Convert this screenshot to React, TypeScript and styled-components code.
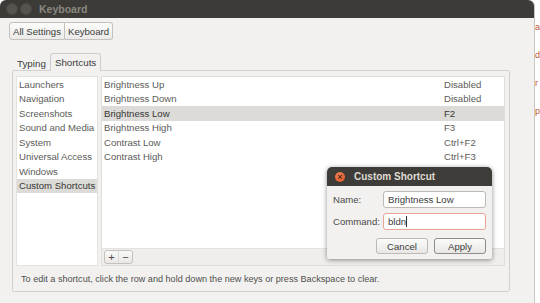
import { createGlobalStyle } from 'styled-components';
import styled from 'styled-components';

const categories = [
  'Launchers',
  'Navigation',
  'Screenshots',
  'Sound and Media',
  'System',
  'Universal Access',
  'Windows',
  'Custom Shortcuts',
];

const shortcuts = [
  { name: 'Brightness Up', accel: 'Disabled' },
  { name: 'Brightness Down', accel: 'Disabled' },
  { name: 'Brightness Low', accel: 'F2' },
  { name: 'Brightness High', accel: 'F3' },
  { name: 'Contrast Low', accel: 'Ctrl+F2' },
  { name: 'Contrast High', accel: 'Ctrl+F3' },
];

export default function App() {
  return (
    <>
      <GlobalStyle />
      <Page>
        <Window>
          <TitleBar>
            <WinButtons>
              <WinDot />
              <WinDot />
            </WinButtons>
            <Title>Keyboard</Title>
          </TitleBar>

          <Crumbs>
            <Crumb>All Settings</Crumb>
            <Crumb>Keyboard</Crumb>
          </Crumbs>

          <Tabs>
            <Tab>Typing</Tab>
            <Tab $active>Shortcuts</Tab>
          </Tabs>

          <Notebook>
            <Panes>
              <CategoryList>
                {categories.map((c, i) => (
                  <Row key={c} $selected={i === categories.length - 1}>
                    {c}
                  </Row>
                ))}
              </CategoryList>

              <RightPane>
                <ShortcutList>
                  {shortcuts.map((s) => (
                    <Row key={s.name} $selected={s.name === 'Brightness Low'}>
                      <NameCell>{s.name}</NameCell>
                      <AccelCell>{s.accel}</AccelCell>
                    </Row>
                  ))}
                </ShortcutList>
                <ListToolbar>
                  <SmallButtons>
                    <SmallButton>+</SmallButton>
                    <SmallButton>−</SmallButton>
                  </SmallButtons>
                </ListToolbar>
              </RightPane>
            </Panes>
            <Hint>
              To edit a shortcut, click the row and hold down the new keys or press Backspace to clear.
            </Hint>
          </Notebook>
        </Window>

        <Backdrop>
          <span>a</span>
          <span>d</span>
          <span>r</span>
          <span>p</span>
        </Backdrop>

        <Dialog>
          <DialogTitle>
            <CloseDot>×</CloseDot>
            Custom Shortcut
          </DialogTitle>
          <DialogBody>
            <Field>
              <FieldLabel>Name:</FieldLabel>
              <Entry>Brightness Low</Entry>
            </Field>
            <Field>
              <FieldLabel>Command:</FieldLabel>
              <Entry $focused>
                bldn<Caret />
              </Entry>
            </Field>
            <DialogButtons>
              <PushButton>Cancel</PushButton>
              <PushButton $default>Apply</PushButton>
            </DialogButtons>
          </DialogBody>
        </Dialog>
      </Page>
    </>
  );
}

const GlobalStyle = createGlobalStyle`
  html, body {
    margin: 0;
    padding: 0;
    background: #ffffff;
  }
  body {
    font-family: 'Liberation Sans', Arial, sans-serif;
    font-size: 9.6px;
    color: #4f4f4c;
  }
`;

const Page = styled.div`
  position: relative;
  display: flex;
  width: 540px;
  height: 303px;
  overflow: hidden;
`;

const Window = styled.div`
  width: 535px;
  height: 303px;
  background: #f2f1f0;
  border-radius: 6px 6px 0 0;
  border-right: 1px solid #c9c7c3;
  box-sizing: border-box;
  display: flex;
  flex-direction: column;
`;

const TitleBar = styled.div`
  height: 18px;
  background: #3c3b37;
  border-radius: 6px 6px 0 0;
  display: flex;
  align-items: center;
  padding-left: 6px;
  gap: 7px;
`;

const WinButtons = styled.div`
  display: flex;
  gap: 2px;
`;

const WinDot = styled.div`
  width: 10px;
  height: 10px;
  border-radius: 50%;
  background: #55544f;
  border: 1px solid #4a4944;
`;

const Title = styled.span`
  color: #8a8880;
  font-size: 10.5px;
  font-weight: bold;
`;

const Crumbs = styled.div`
  display: flex;
  margin: 4px 0 0 9px;
  height: 18px;
`;

const Crumb = styled.div`
  display: flex;
  align-items: center;
  padding: 0 3px;
  border: 1px solid #c3c1bd;
  background: linear-gradient(#fbfbfa, #ecebe9);
  color: #3c3c3c;
  font-size: 9.6px;
  &:first-child {
    border-radius: 3px 0 0 3px;
  }
  &:last-child {
    border-radius: 0 3px 3px 0;
    border-left: none;
  }
`;

const Tabs = styled.div`
  display: flex;
  align-items: flex-end;
  margin: 13px 0 0 12px;
  height: 18px;
  padding-left: 3px;
  position: relative;
  z-index: 1;
`;

const Tab = styled.div<{ $active?: boolean }>`
  height: ${(p) => (p.$active ? '18px' : '15px')};
  display: flex;
  align-items: center;
  padding: 0 ${(p) => (p.$active ? '4px' : '2px')};
  color: #3c3c3c;
  font-size: 9.8px;
  box-sizing: border-box;
  ${(p) =>
    p.$active &&
    `
    background: #f2f1f0;
    border: 1px solid #cfcdc9;
    border-bottom: none;
    border-radius: 3px 3px 0 0;
    margin-left: 2px;
  `}
`;

const Notebook = styled.div`
  margin: -1px 0 0 12px;
  width: 498px;
  height: 222px;
  border: 1px solid #d3d1cd;
  border-radius: 2px;
  box-sizing: border-box;
  padding: 5px 4px 0 3px;
  display: flex;
  flex-direction: column;
`;

const Panes = styled.div`
  display: flex;
  gap: 3px;
  height: 190px;
`;

const CategoryList = styled.div`
  width: 82px;
  background: #ffffff;
  border: 1px solid #e4e2df;
  box-sizing: border-box;
`;

const RightPane = styled.div`
  flex: 1;
  display: flex;
  flex-direction: column;
  border: 1px solid #e0deda;
  box-sizing: border-box;
`;

const ShortcutList = styled.div`
  height: 171px;
  background: #ffffff;
`;

const Row = styled.div<{ $selected?: boolean }>`
  height: 14.5px;
  display: flex;
  align-items: center;
  padding-left: 2px;
  white-space: nowrap;
  color: ${(p) => (p.$selected ? '#363634' : '#5c5c59')};
  background: ${(p) => (p.$selected ? '#dcdbd8' : 'transparent')};
`;

const NameCell = styled.span`
  width: 340px;
`;

const AccelCell = styled.span``;

const ListToolbar = styled.div`
  flex: 1;
  background: #efeeec;
  border-top: 1px solid #e4e2df;
  display: flex;
  align-items: center;
  padding-left: 2px;
`;

const SmallButtons = styled.div`
  display: flex;
  border: 1px solid #c4c2be;
  border-radius: 3px;
  background: linear-gradient(#fafaf9, #e9e8e6);
`;

const SmallButton = styled.div`
  width: 13px;
  height: 12px;
  display: flex;
  align-items: center;
  justify-content: center;
  font-size: 11px;
  color: #4d4d4b;
  & + & {
    border-left: 1px solid #dddbd8;
  }
`;

const Hint = styled.div`
  flex: 1;
  display: flex;
  align-items: center;
  padding-left: 5px;
  font-size: 9.1px;
  color: #4f4f4c;
`;

const Backdrop = styled.div`
  flex: 1;
  display: flex;
  flex-direction: column;
  gap: 18px;
  padding-top: 22px;
  color: #c0552f;
  font-size: 9px;
  overflow: hidden;
`;

const Dialog = styled.div`
  position: absolute;
  left: 327px;
  top: 167px;
  width: 165px;
  height: 92px;
  background: #f2f1f0;
  border-radius: 5px 5px 2px 2px;
  box-shadow: 0 1px 5px rgba(0, 0, 0, 0.45);
  display: flex;
  flex-direction: column;
`;

const DialogTitle = styled.div`
  height: 19px;
  background: #3d3c38;
  border-radius: 5px 5px 0 0;
  display: flex;
  align-items: center;
  gap: 9px;
  padding-left: 8px;
  color: #dfdbd2;
  font-weight: bold;
  font-size: 10px;
`;

const CloseDot = styled.span`
  width: 10px;
  height: 10px;
  border-radius: 50%;
  background: radial-gradient(circle at 40% 35%, #f08a5c, #df4a1c);
  color: #5a2010;
  font-size: 9px;
  line-height: 10px;
  text-align: center;
`;

const DialogBody = styled.div`
  display: flex;
  flex-direction: column;
  gap: 5px;
  padding: 5px 6px 0 6px;
`;

const Field = styled.div`
  display: flex;
  align-items: center;
  height: 17px;
`;

const FieldLabel = styled.span`
  width: 50px;
  color: #4a4a48;
`;

const Entry = styled.div<{ $focused?: boolean }>`
  width: 103px;
  height: 17px;
  box-sizing: border-box;
  display: flex;
  align-items: center;
  padding-left: 4px;
  background: #ffffff;
  border: 1px solid ${(p) => (p.$focused ? '#e8a592' : '#bdbab5')};
  border-radius: 3px;
  color: #3c3c3c;
`;

const Caret = styled.span`
  width: 1px;
  height: 11px;
  background: #333;
`;

const DialogButtons = styled.div`
  display: flex;
  justify-content: flex-end;
  gap: 6px;
  margin-top: 3px;
`;

const PushButton = styled.div<{ $default?: boolean }>`
  width: 52px;
  height: 16px;
  box-sizing: border-box;
  display: flex;
  align-items: center;
  justify-content: center;
  border: 1px solid ${(p) => (p.$default ? '#8f8d88' : '#bdbab5')};
  border-radius: 3px;
  background: linear-gradient(#fbfbfa, #e8e7e5);
  color: #3c3c3c;
`;
